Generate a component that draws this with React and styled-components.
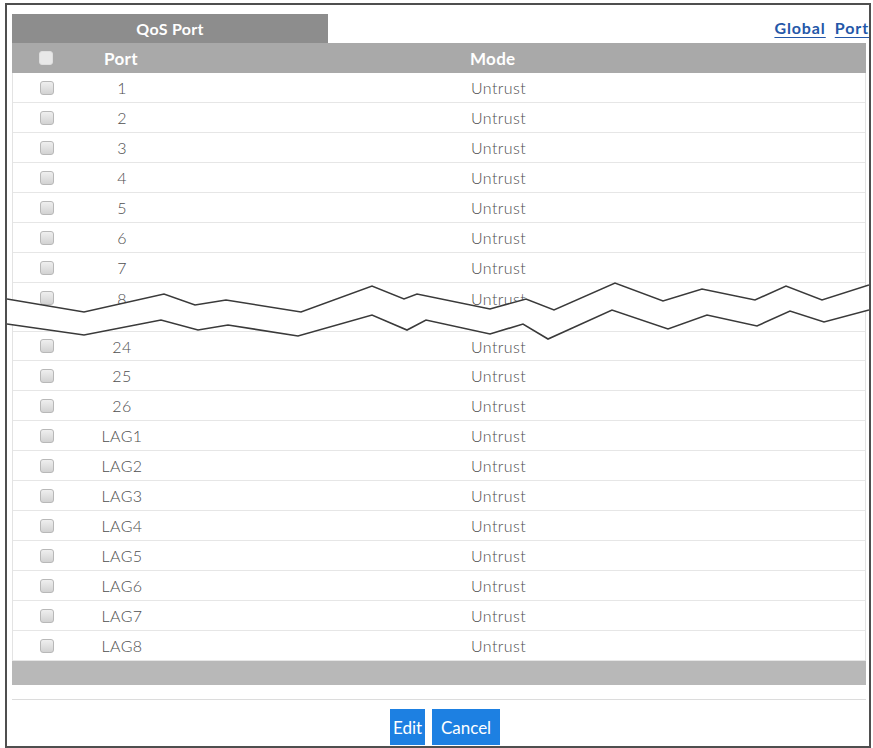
import React from "react";
import styled, { createGlobalStyle } from "styled-components";

const PageStyle = createGlobalStyle`
  html, body { margin: 0; padding: 0; background: #ffffff; }
  body { font-family: "Century Gothic", Lato, "DejaVu Sans", sans-serif; }
`;

const Frame = styled.div`
  position: relative;
  box-sizing: border-box;
  margin: 3px 0 0 5px;
  width: 866px;
  height: 745px;
  border: 2px solid #4f4f4f;
  padding: 9px 3px 0 5px;
  display: flex;
  flex-direction: column;
`;

const TopBar = styled.div`
  display: flex;
  height: 29px;
  align-items: stretch;
`;

const Tab = styled.div`
  width: 316px;
  background: #8d8d8d;
  color: #ffffff;
  font-weight: 700;
  font-size: 16px;
  letter-spacing: 0.3px;
  display: flex;
  align-items: center;
  justify-content: center;
`;

const Links = styled.div`
  margin-left: auto;
  margin-right: -3px;
  display: flex;
  gap: 9px;
  padding-top: 4px;
`;

const NavLink = styled.a`
  color: #2457a8;
  font-weight: 700;
  font-size: 16px;
  letter-spacing: 0.9px;
  text-decoration: underline;
  text-underline-offset: 3px;
  cursor: pointer;
`;

const Grid = styled.div`
  display: grid;
  grid-template-columns: 68px 82px 1fr;
  align-items: center;
  box-sizing: border-box;
  height: 30px;
`;

const HeaderRow = styled(Grid)`
  background: #a9a9a9;
  color: #ffffff;
  font-weight: 700;
  font-size: 17px;
  letter-spacing: 0.3px;
`;

const Body = styled.div`
  border-left: 1px solid #e3e3e3;
  border-right: 1px solid #e3e3e3;
  display: flex;
  flex-direction: column;
`;

const Row = styled(Grid)`
  border-bottom: ${(p) => (p.$last ? "none" : "1px solid #e6e6e6")};
  border-top: ${(p) => (p.$first ? "1px solid #e6e6e6" : "none")};
  color: #4e4e4e;
  font-size: 16px;
  font-weight: 300;
  letter-spacing: 0.4px;
`;

const Gap = styled.div`
  height: 18px;
`;

const CheckCell = styled.div`
  display: flex;
  justify-content: center;
`;

const Box = styled.span`
  display: block;
  box-sizing: border-box;
  width: 14px;
  height: 14px;
  border-radius: 3px;
  border: 1px solid ${(p) => (p.$head ? "#dedede" : "#b8b8b8")};
  background: ${(p) =>
    p.$head ? "#e8e8e8" : "linear-gradient(#efefef, #d2d2d2)"};
`;

const PortCell = styled.div`
  text-align: center;
`;

const ModeCell = styled.div`
  padding-left: 308px;
`;

const FooterBar = styled.div`
  height: 24px;
  background: #b8b8b8;
`;

const Divider = styled.div`
  margin-top: 14px;
  height: 1px;
  background: #dcdcdc;
`;

const ButtonRow = styled.div`
  margin-top: 9px;
  display: flex;
  justify-content: center;
  gap: 7px;
  padding-left: 12px;
`;

const Button = styled.button`
  width: ${(p) => p.$w}px;
  height: 36px;
  border: none;
  background: #1d80e2;
  color: #ffffff;
  font-family: inherit;
  font-size: 17px;
  padding: 0;
  cursor: pointer;
`;

const BreakMark = styled.svg`
  position: absolute;
  left: 0;
  top: 275px;
  width: 862px;
  height: 75px;
  pointer-events: none;
`;

const upper = [
  [7, 299], [84, 312], [164, 294], [195, 305], [226, 300], [301, 312],
  [372, 286], [404, 299], [417, 294], [490, 309], [526, 299], [554, 310],
  [615, 283], [663, 301], [702, 289], [755, 300], [786, 286], [822, 300],
  [869, 285],
];

const lower = [
  [7, 324], [84, 335], [161, 320], [198, 330], [228, 325], [298, 336],
  [372, 315], [407, 330], [426, 320], [490, 334], [523, 324], [548, 339],
  [612, 310], [668, 329], [707, 315], [757, 326], [790, 311], [824, 322],
  [869, 310],
];

// shift page coordinates into the svg box
const toLocal = (pts) => pts.map(([x, y]) => `${x - 7},${y - 280}`).join(" ");

const topPorts = ["1", "2", "3", "4", "5", "6", "7", "8"];
const bottomPorts = [
  "24", "25", "26", "LAG1", "LAG2", "LAG3", "LAG4", "LAG5", "LAG6", "LAG7", "LAG8",
];

function PortRow({ port, first, last }) {
  return (
    <Row $first={first} $last={last}>
      <CheckCell>
        <Box />
      </CheckCell>
      <PortCell>{port}</PortCell>
      <ModeCell>Untrust</ModeCell>
    </Row>
  );
}

export default function App() {
  return (
    <>
      <PageStyle />
      <Frame>
        <TopBar>
          <Tab>QoS Port</Tab>
          <Links>
            <NavLink>Global</NavLink>
            <NavLink>Port</NavLink>
          </Links>
        </TopBar>
        <HeaderRow>
          <CheckCell>
            <Box $head />
          </CheckCell>
          <PortCell>Port</PortCell>
          <ModeCell>Mode</ModeCell>
        </HeaderRow>
        <Body>
          {topPorts.map((p, i) => (
            <PortRow key={p} port={p} last={i === topPorts.length - 1} />
          ))}
          <Gap />
          {bottomPorts.map((p, i) => (
            <PortRow key={p} port={p} first={i === 0} />
          ))}
        </Body>
        <FooterBar />
        <Divider />
        <ButtonRow>
          <Button $w={35}>Edit</Button>
          <Button $w={68}>Cancel</Button>
        </ButtonRow>
        <BreakMark viewBox="0 0 862 75">
          <polygon
            points={`${toLocal(upper)} ${toLocal([...lower].reverse())}`}
            fill="#ffffff"
          />
          <polyline points={toLocal(upper)} fill="none" stroke="#3a3a3a" strokeWidth="1.6" />
          <polyline points={toLocal(lower)} fill="none" stroke="#3a3a3a" strokeWidth="1.6" />
        </BreakMark>
      </Frame>
    </>
  );
}
